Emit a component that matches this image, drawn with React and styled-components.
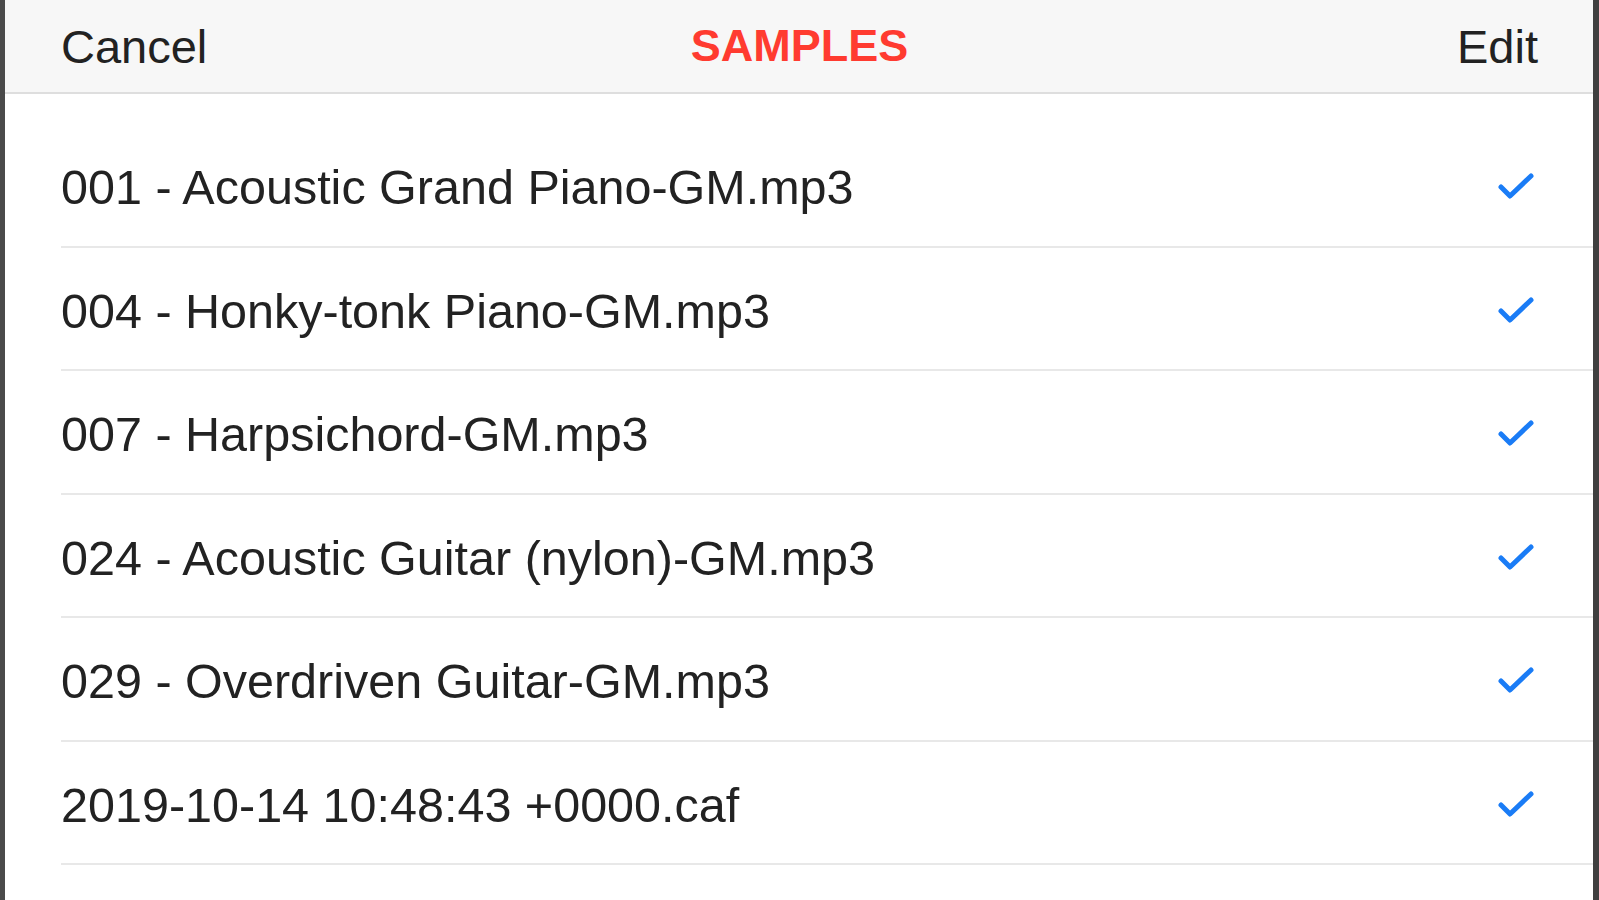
import styled, { createGlobalStyle } from "styled-components";

const GlobalStyle = createGlobalStyle`
  html, body {
    margin: 0;
    padding: 0;
    background: #ffffff;
  }
  body {
    font-family: "Liberation Sans", Arial, Helvetica, sans-serif;
  }
`;

const Screen = styled.div`
  width: 100%;
  height: 900px;
  box-sizing: border-box;
  border-left: 5px solid #4a4a4a;
  border-right: 6px solid #3f3f3f;
  background: #ffffff;
  overflow: hidden;
  display: flex;
  flex-direction: column;
`;

const NavBar = styled.div`
  height: 92px;
  flex-shrink: 0;
  background: #f7f7f7;
  border-bottom: 2px solid #dedede;
  display: grid;
  grid-template-columns: 1fr auto 1fr;
  align-items: center;
  padding: 0 55px 0 56px;
`;

const NavButton = styled.span`
  font-size: 47px;
  color: #222222;
  justify-self: ${(p) => (p.$right ? "end" : "start")};
`;

const Title = styled.span`
  font-size: 45px;
  font-weight: 700;
  color: #ff3b30;
`;

const List = styled.div`
  padding-top: 30px;
  display: flex;
  flex-direction: column;
`;

const Row = styled.div`
  box-sizing: border-box;
  height: 123.5px;
  margin-left: 56px;
  padding: 5px 58px 0 0;
  border-bottom: 2px solid #e8e8e8;
  display: flex;
  align-items: center;
  justify-content: space-between;
`;

const RowLabel = styled.span`
  font-size: 48.5px;
  color: #222222;
`;

const Check = () => (
  <svg width="37" height="30" viewBox="0 0 37 30">
    <path
      d="M3 15 L12 24 L33 4"
      fill="none"
      stroke="#1a7cf6"
      strokeWidth="5"
      strokeLinecap="round"
      strokeLinejoin="round"
    />
  </svg>
);

const samples = [
  "001 - Acoustic Grand Piano-GM.mp3",
  "004 - Honky-tonk Piano-GM.mp3",
  "007 - Harpsichord-GM.mp3",
  "024 - Acoustic Guitar (nylon)-GM.mp3",
  "029 - Overdriven Guitar-GM.mp3",
  "2019-10-14 10:48:43 +0000.caf",
];

const App = () => {
  return (
    <>
      <GlobalStyle />
      <Screen>
        <NavBar>
          <NavButton>Cancel</NavButton>
          <Title>SAMPLES</Title>
          <NavButton $right>Edit</NavButton>
        </NavBar>
        <List>
          {samples.map((name) => (
            <Row key={name}>
              <RowLabel>{name}</RowLabel>
              <Check />
            </Row>
          ))}
        </List>
      </Screen>
    </>
  );
};

export default App;
